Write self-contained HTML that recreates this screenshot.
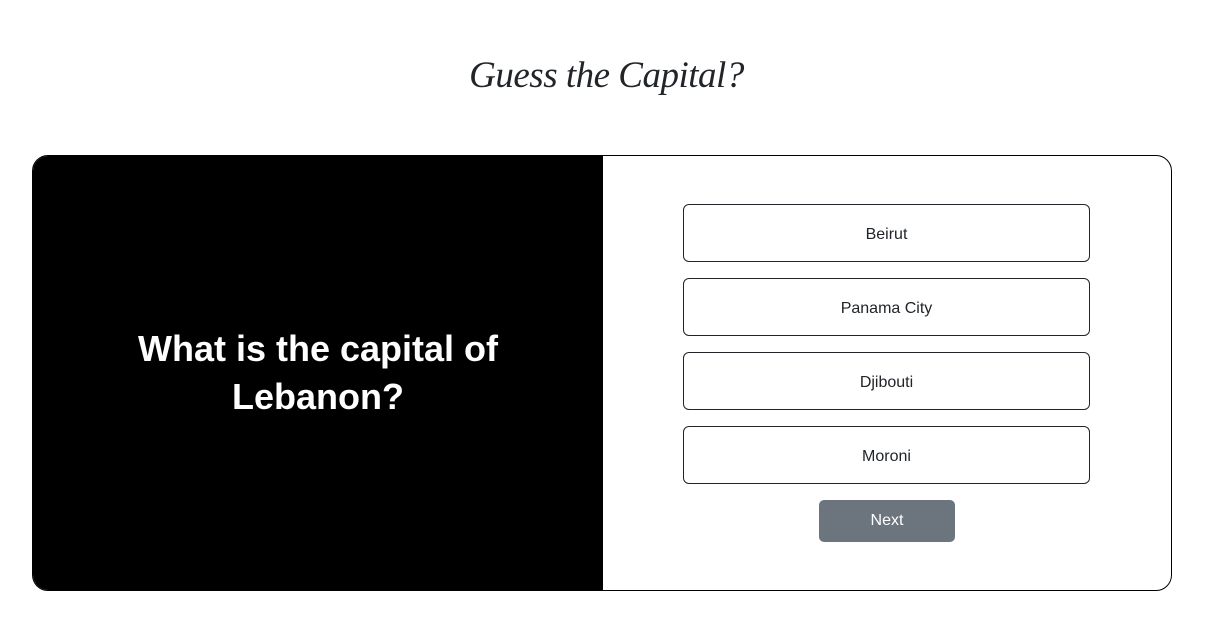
<!DOCTYPE html>
<html><head><style>
body{margin:0;width:1213px;height:637px;background:#fff;font-family:"Liberation Sans",sans-serif;position:relative;overflow:hidden}
h1{position:absolute;top:52px;left:0;width:1213px;text-align:center;margin:0;font-family:"Liberation Serif",serif;font-style:italic;font-weight:normal;font-size:37px;letter-spacing:-0.5px;color:#212529;line-height:48px}
.card{position:absolute;left:32px;top:155px;width:1138px;height:434px;border:1px solid #000;border-radius:16px;overflow:hidden}
.left{position:absolute;left:0;top:0;width:570px;height:100%;background:#000;color:#fff;display:flex;align-items:center;justify-content:center;text-align:center;font-size:36px;font-weight:bold;line-height:48px}
.opt{position:absolute;left:650px;width:405px;height:56px;border:1px solid #212529;border-radius:6px;display:flex;align-items:center;justify-content:center;font-size:16px;color:#212529;padding-top:3px;box-sizing:content-box;height:53px}
.next{position:absolute;left:786px;top:344px;width:136px;height:42px;background:#6c757d;border-radius:5px;color:#fff;font-size:16px;display:flex;align-items:center;justify-content:center}
</style></head><body>
<h1>Guess the Capital?</h1>
<div class="card">
<div class="left"><div>What is the capital of<br>Lebanon?</div></div>
<div class="opt" style="top:48px">Beirut</div>
<div class="opt" style="top:122px">Panama City</div>
<div class="opt" style="top:196px">Djibouti</div>
<div class="opt" style="top:270px">Moroni</div>
<div class="next">Next</div>
</div>
</body></html>
